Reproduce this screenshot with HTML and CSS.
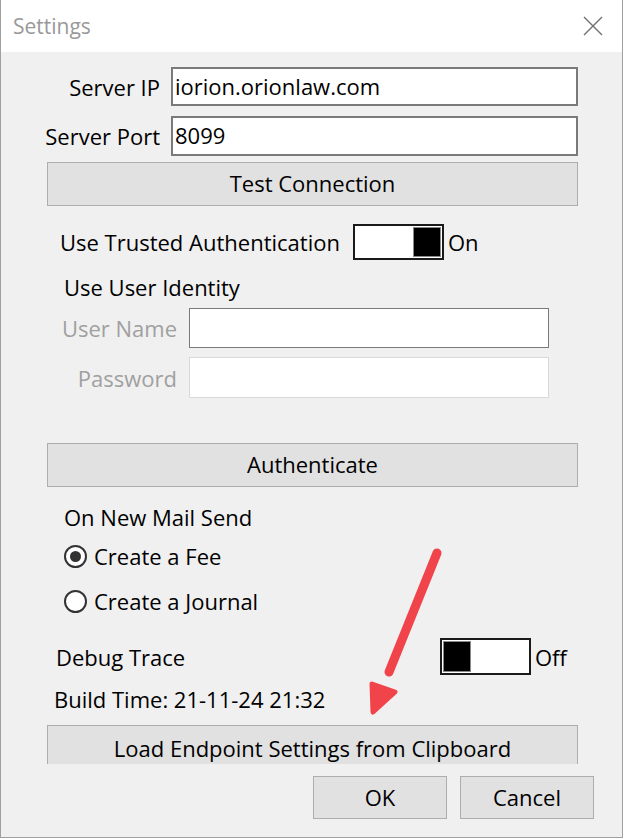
FILE: index.html
```html
<!DOCTYPE html>
<html lang="en">
<head>
    <meta charset="UTF-8">
    <title>Settings</title>
    <link rel="stylesheet" href="styles.css">
</head>
<body>
    <div class="window">
        <div class="titlebar">
            <span class="title">Settings</span>
            <svg class="close" width="20" height="20" viewBox="0 0 20 20">
                <path d="M1 1 L19 19 M19 1 L1 19" stroke="#707070" stroke-width="1.4" fill="none"/>
            </svg>
        </div>

        <div class="content">
            <div class="field-row ip">
                <label class="label">Server IP</label>
                <div class="input">iorion.orionlaw.com</div>
            </div>
            <div class="field-row port">
                <label class="label">Server Port</label>
                <div class="input">8099</div>
            </div>
            <div class="button wide test">Test Connection</div>

            <div class="toggle-row trusted">
                <span class="toggle-label">Use Trusted Authentication</span>
                <div class="toggle on"><div class="knob"></div></div>
                <span>On</span>
            </div>

            <div class="text-row identity-title">Use User Identity</div>
            <div class="field-row small user">
                <label class="label disabled">User Name</label>
                <div class="input"></div>
            </div>
            <div class="field-row small pass">
                <label class="label disabled">Password</label>
                <div class="input faint"></div>
            </div>

            <div class="button wide auth">Authenticate</div>

            <div class="text-row mail">On New Mail Send</div>
            <div class="radio-row fee"><span class="radio checked"></span>Create a Fee</div>
            <div class="radio-row journal"><span class="radio"></span>Create a Journal</div>

            <div class="toggle-row debug">
                <span class="toggle-label">Debug Trace</span>
                <div class="toggle off"><div class="knob"></div></div>
                <span>Off</span>
            </div>

            <div class="text-row build">Build Time: 21-11-24 21:32</div>
            <div class="button wide clip">Load Endpoint Settings from Clipboard</div>

            <div class="footer">
                <div class="button ok">OK</div>
                <div class="button cancel">Cancel</div>
            </div>
        </div>

        <!-- annotation arrow drawn over the dialog -->
        <svg class="arrow" width="624" height="839" viewBox="0 0 624 839">
            <line x1="437" y1="553" x2="389" y2="672" stroke="#f0434a" stroke-width="9" stroke-linecap="round"/>
            <polygon points="373,712 372,684 395,692" fill="#f0434a" stroke="#f0434a" stroke-width="5" stroke-linejoin="round"/>
        </svg>
    </div>
</body>
</html>
```

FILE: styles.css
```css
body {
    margin: 0;
    background: #ffffff;
    font-family: "Open Sans", "Noto Sans", sans-serif;
    color: #000;
}

.window {
    position: relative;
    width: 621px;
    height: 837px;
    background: #f0f0f0;
    border-left: 1px solid #a0a0a0;
    border-right: 1px solid #a0a0a0;
    border-bottom: 1px solid #a0a0a0;
    overflow: hidden;
}

.titlebar {
    height: 52px;
    background: #ffffff;
    display: flex;
    align-items: center;
    justify-content: space-between;
    padding: 0 19px 0 12px;
}

.title {
    font-size: 21px;
    color: #999999;
}

.close {
    margin-top: -1px;
}

.content {
    padding: 15px 0 0 46px;
    font-size: 22px;
}

/* labelled text boxes */
.field-row {
    display: flex;
    align-items: center;
    height: 39px;
}

.label {
    width: 113px;
    flex-shrink: 0;
    display: flex;
    justify-content: flex-end;
    white-space: nowrap;
    margin-right: 11px;
}

.input {
    width: 407px;
    height: 39px;
    flex-shrink: 0;
    box-sizing: border-box;
    background: #fff;
    border: 2px solid #7a7a7a;
    line-height: 35px;
    padding-left: 2px;
}

.port {
    margin-top: 10px;
    height: 40px;
}

.port .input {
    height: 40px;
}

.small .label {
    width: 130px;
    margin-right: 12px;
}

.small .input {
    width: 360px;
    height: 40px;
    border: 1px solid #7a7a7a;
}

.user {
    margin-top: 6px;
    height: 40px;
}

.pass {
    margin-top: 9px;
    height: 41px;
}

.pass .input {
    height: 41px;
}

.input.faint {
    border-color: #d9d9d9;
}

.disabled {
    color: #a0a0a0;
}

/* buttons */
.button {
    background: #e1e1e1;
    border: 1px solid #adadad;
    text-align: center;
    box-sizing: border-box;
}

.wide {
    width: 531px;
    height: 44px;
    line-height: 41px;
}

.test {
    margin-top: 6px;
}

.auth {
    margin-top: 45px;
}

.clip {
    height: 39px;
    margin-top: 11px;
    line-height: 44px;
    border-bottom: none;
}

.footer {
    display: flex;
    justify-content: flex-end;
    gap: 13px;
    margin: 12px 28px 0 0;
}

.ok, .cancel {
    height: 43px;
    line-height: 40px;
    width: 134px;
}

/* toggle switches */
.toggle-row {
    display: flex;
    align-items: center;
    height: 36px;
}

.trusted {
    margin: 18px 0 0 13px;
}

.trusted .toggle-label {
    width: 281px;
    white-space: nowrap;
}

.debug {
    margin: 22px 0 0 9px;
    height: 37px;
}

.debug .toggle-label {
    width: 384px;
}

.toggle {
    width: 91px;
    height: 36px;
    flex-shrink: 0;
    box-sizing: border-box;
    border: 2px solid #1a1a1a;
    background: #fff;
    display: flex;
    align-items: center;
    margin: 0 4px 0 12px;
    padding: 1px;
}

.debug .toggle {
    margin-left: 0;
    height: 37px;
}

.knob {
    width: 28px;
    height: 100%;
    box-sizing: border-box;
    background: #000;
    border: 1px solid #8a8a8a;
}

.toggle.on {
    justify-content: flex-end;
}

/* plain text lines */
.text-row {
    height: 30px;
    line-height: 30px;
}

.identity-title {
    margin: 12px 0 0 17px;
}

.mail {
    margin: 15px 0 0 17px;
}

.build {
    margin: 9px 0 0 7px;
}

/* radio buttons */
.radio-row {
    display: flex;
    align-items: center;
    height: 30px;
    margin-left: 17px;
}

.fee {
    margin-top: 9px;
}

.journal {
    margin-top: 15px;
}

.radio {
    width: 23px;
    height: 23px;
    box-sizing: border-box;
    border: 2px solid #333;
    border-radius: 50%;
    background: #fff;
    margin-right: 7px;
    position: relative;
}

.radio.checked::after {
    content: "";
    position: absolute;
    left: 4px;
    top: 4px;
    width: 11px;
    height: 11px;
    border-radius: 50%;
    background: #333;
}

.arrow {
    position: absolute;
    left: -1px;
    top: 0;
    pointer-events: none;
}
```
